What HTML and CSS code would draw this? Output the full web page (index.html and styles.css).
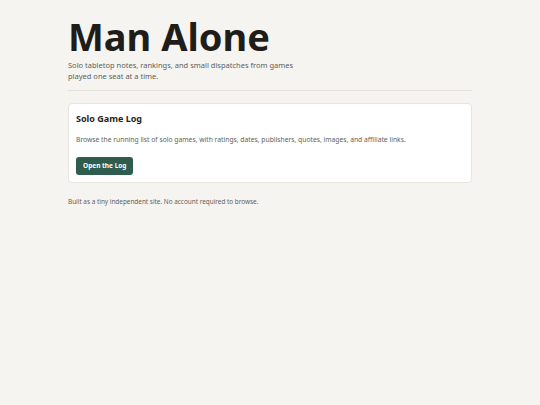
FILE: index.html
```html
<!DOCTYPE html>
<html lang="en">
<head>
<meta charset="utf-8">
<title>Man Alone</title>
<link rel="stylesheet" href="styles.css">
</head>
<body>
<main class="page">
  <header class="masthead">
    <h1 class="title">Man Alone</h1>
    <p class="tagline">Solo tabletop notes, rankings, and small dispatches from games played one seat at a time.</p>
  </header>
  <section class="card">
    <h2 class="card-title">Solo Game Log</h2>
    <p class="card-text">Browse the running list of solo games, with ratings, dates, publishers, quotes, images, and affiliate links.</p>
    <a class="button" href="#">Open the Log</a>
  </section>
  <p class="footer">Built as a tiny independent site. No account required to browse.</p>
</main>
</body>
</html>
```

FILE: styles.css
```css
* { box-sizing: border-box; }
html, body { margin: 0; padding: 0; }
body {
  background: #f5f4f0;
  font-family: "Noto Sans", "Open Sans", sans-serif;
  color: #1f1f1c;
}
.page {
  width: 404px;
  margin: 0 auto;
  padding-top: 13px;
}
.masthead {
  padding-bottom: 8px;
  border-bottom: 1px solid #e4e1da;
}
.title {
  margin: 0;
  font-size: 38px;
  line-height: 47px;
  font-weight: 700;
  color: #1e1d1a;
}
.tagline {
  margin: 0;
  max-width: 226px;
  font-size: 7.5px;
  line-height: 11px;
  color: #615f5a;
}
.card {
  margin-top: 12px;
  background: #ffffff;
  border: 1px solid #e8e5df;
  border-radius: 4px;
  padding: 8px 7px 7px;
}
.card-title {
  margin: 0;
  font-size: 9px;
  line-height: 13px;
  font-weight: 700;
  color: #1f1f1c;
}
.card-text {
  margin: 9.5px 0 0;
  font-size: 6.75px;
  line-height: 10px;
  color: #615f5a;
}
.button {
  display: inline-block;
  margin-top: 12px;
  padding: 0 7px;
  height: 18px;
  line-height: 18px;
  border-radius: 3px;
  background: #2e5d4e;
  color: #ffffff;
  font-size: 6.5px;
  font-weight: 700;
  text-decoration: none;
}
.footer {
  margin: 14.5px 0 0;
  font-size: 6.4px;
  line-height: 10px;
  color: #615f5a;
}
```
